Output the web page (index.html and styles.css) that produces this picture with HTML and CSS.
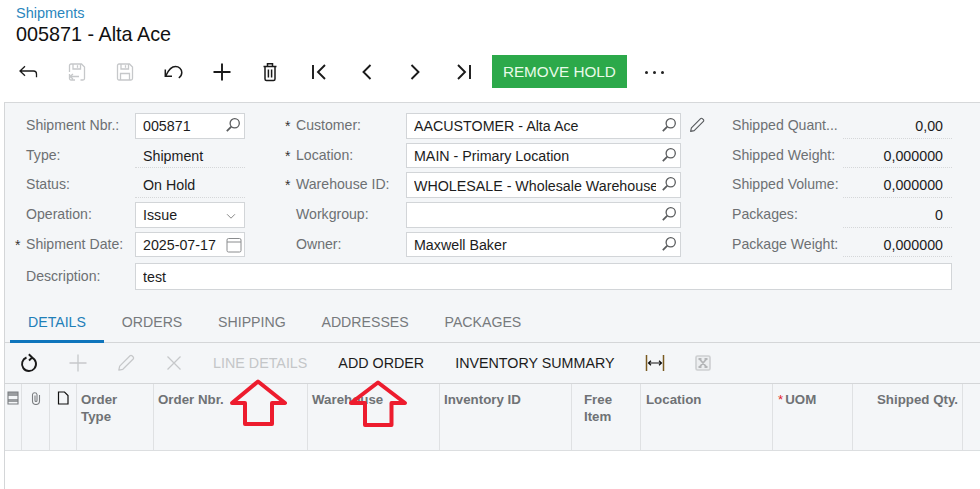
FILE: index.html
```html
<!DOCTYPE html>
<html lang="en">
<head>
<meta charset="utf-8">
<title>Shipments</title>
<link rel="stylesheet" href="styles.css">
</head>
<body>
<svg class="defs" width="0" height="0" aria-hidden="true">
  <symbol id="search" viewBox="0 0 16 16"><circle cx="9.700" cy="6.300" r="4.600" fill="none" stroke="currentColor" stroke-width="1.300"/><path d="M6.300 9.700 1.800 14.200" fill="none" stroke="currentColor" stroke-width="1.800"/></symbol>
  <symbol id="pencil" viewBox="0 0 16 16"><path d="M1.600 14.400 2.400 10.800 11.600 1.600a1.200 1.200 0 0 1 1.700 0l1.100 1.100a1.200 1.200 0 0 1 0 1.700L5.200 13.600Z" fill="none" stroke="currentColor" stroke-width="1.100" stroke-linejoin="round"/></symbol>
</svg>

<header class="page-head">
  <a class="crumb">Shipments</a>
  <h1 class="title">005871 - Alta Ace</h1>
</header>

<div class="main-bar">
  <span class="ibtn"><svg class="i24" viewBox="0 0 24 24"><path d="M4 11H17.500a3 3 0 0 1 3 3v3.200M9 6.300 4 11 9 15.700"/></svg></span>
  <span class="ibtn off"><svg class="i24" viewBox="0 0 24 24"><path d="M10 20H6a1.500 1.500 0 0 1-1.500-1.500V14M4.500 12V5.500A1.500 1.500 0 0 1 6 4H16.500L19.500 7V18.500A1.500 1.500 0 0 1 18 20H15.500M8 4V9H15.500V4M12.500 5.300V7.700M5 16.500H14M8 14 5 16.500 8 19"/></svg></span>
  <span class="ibtn off"><svg class="i24" viewBox="0 0 24 24"><path d="M6 4H16.500L19.500 7V18.500A1.500 1.500 0 0 1 18 20H6A1.500 1.500 0 0 1 4.500 18.500V5.500A1.500 1.500 0 0 1 6 4ZM8 4V9H15.500V4M12.500 5.300V7.700M7.500 20V13.500H16.500V20"/></svg></span>
  <span class="ibtn"><svg class="i24 mid" viewBox="0 0 24 24"><path d="M5 15.500C7 11 10 6.500 14.500 6.500 18 6.500 20.800 9 20.800 12.500 20.800 14.800 19.500 16.800 17.800 18M4.300 9.500V16.300H11"/></svg></span>
  <span class="ibtn"><svg class="i24 thick" viewBox="0 0 24 24"><path d="M3.500 12H20.500M12 3.500V20.500"/></svg></span>
  <span class="ibtn"><svg class="i24 mid" viewBox="0 0 24 24"><path d="M5.500 6.500H18.500M9.500 6V3.800H14.500V6M7 6.500V19A1.500 1.500 0 0 0 8.500 20.500H15.500A1.500 1.500 0 0 0 17 19V6.500M10.400 9.500V17.500M13.600 9.500V17.500"/></svg></span>
  <span class="ibtn"><svg class="i24 thick" viewBox="0 0 24 24"><path d="M6 5V19M18 5 11 12 18 19"/></svg></span>
  <span class="ibtn"><svg class="i24 thick" viewBox="0 0 24 24"><path d="M15.500 5 8.500 12 15.500 19"/></svg></span>
  <span class="ibtn"><svg class="i24 thick" viewBox="0 0 24 24"><path d="M8.500 5 15.500 12 8.500 19"/></svg></span>
  <span class="ibtn"><svg class="i24 thick" viewBox="0 0 24 24"><path d="M18 5V19M6 5 13 12 6 19"/></svg></span>
  <button class="primary">REMOVE HOLD</button>
  <span class="more"><i></i><i></i><i></i></span>
</div>

<main class="panel">
  <section class="form">
    <label class="lbl c1">Shipment Nbr.:</label>
    <div class="inp"><span class="val">005871</span><svg class="ico"><use href="#search"/></svg></div>
    <label class="lbl c2 req">Customer:</label>
    <div class="inp"><span class="val">AACUSTOMER - Alta Ace</span><svg class="ico"><use href="#search"/></svg></div>
    <svg class="pen"><use href="#pencil"/></svg>
    <label class="lbl c3">Shipped Quant...</label>
    <div class="ro num">0,00</div>

    <label class="lbl c1">Type:</label>
    <div class="ro">Shipment</div>
    <label class="lbl c2 req">Location:</label>
    <div class="inp"><span class="val">MAIN - Primary Location</span><svg class="ico"><use href="#search"/></svg></div>
    <label class="lbl c3 col6">Shipped Weight:</label>
    <div class="ro num">0,000000</div>

    <label class="lbl c1">Status:</label>
    <div class="ro">On Hold</div>
    <label class="lbl c2 req">Warehouse ID:</label>
    <div class="inp"><span class="val">WHOLESALE - Wholesale Warehouse</span><svg class="ico"><use href="#search"/></svg></div>
    <label class="lbl c3 col6">Shipped Volume:</label>
    <div class="ro num">0,000000</div>

    <label class="lbl c1">Operation:</label>
    <div class="inp"><span class="val">Issue</span><svg class="ico chev" viewBox="0 0 16 16"><path d="M3.500 6 8 10.500 12.500 6"/></svg></div>
    <label class="lbl c2">Workgroup:</label>
    <div class="inp"><span class="val"></span><svg class="ico"><use href="#search"/></svg></div>
    <label class="lbl c3 col6">Packages:</label>
    <div class="ro num">0</div>

    <label class="lbl c1 req">Shipment Date:</label>
    <div class="inp date"><span class="val">2025-07-17</span><svg class="ico cal" viewBox="0 0 16 16"><path d="M2.500 1.500H13.500A1.500 1.500 0 0 1 15 3V13.500A1.500 1.500 0 0 1 13.500 15H2.500A1.500 1.500 0 0 1 1 13.500V3A1.500 1.500 0 0 1 2.500 1.500ZM1 5H15"/></svg></div>
    <label class="lbl c2">Owner:</label>
    <div class="inp"><span class="val">Maxwell Baker</span><svg class="ico"><use href="#search"/></svg></div>
    <label class="lbl c3 col6">Package Weight:</label>
    <div class="ro num">0,000000</div>

    <label class="lbl c1 desc-l">Description:</label>
    <div class="inp desc"><span class="val">test</span></div>
  </section>

  <nav class="tabs">
    <a class="tab on">DETAILS</a>
    <a class="tab">ORDERS</a>
    <a class="tab">SHIPPING</a>
    <a class="tab">ADDRESSES</a>
    <a class="tab">PACKAGES</a>
  </nav>

  <div class="grid-bar">
    <span class="gbtn"><svg class="i24 thick" viewBox="0 0 24 24"><path d="M9.500 6.500A7 7 0 1 0 15 6.700M11.800 3.200 15.200 6.500 12 9.500"/></svg></span>
    <span class="gbtn off"><svg class="i24" viewBox="0 0 24 24"><path d="M3.500 12H20.500M12 3.500V20.500"/></svg></span>
    <span class="gbtn off"><svg class="i16"><use href="#pencil"/></svg></span>
    <span class="gbtn off"><svg class="i24" viewBox="0 0 24 24"><path d="M5.500 5.500 18.500 18.500M18.500 5.500 5.500 18.500"/></svg></span>
    <a class="act off first">LINE DETAILS</a>
    <a class="act">ADD ORDER</a>
    <a class="act">INVENTORY SUMMARY</a>
    <span class="fit"><svg class="i24" viewBox="0 0 24 24"><path class="amber" d="M3.500 4V20"/><path class="amber" d="M20.500 4V20"/><path class="arrow" d="M5.500 12H18.500M8 9.800 5.500 12 8 14.200M16 9.800 18.500 12 16 14.200"/></svg></span>
    <span class="xl"><svg class="i16x" viewBox="0 0 16 16"><rect class="xl-box" x="1" y="1" width="14" height="14" rx="1.500"/><path class="xl-x" d="M4.500 4 11.500 12M11.500 4 4.500 12M3.500 4H6.500M9.500 4H12.500M3.500 12H6.500M9.500 12H12.500"/></svg></span>
  </div>

  <div class="ghead">
    <div class="gc"><svg class="mini" viewBox="0 0 12 14"><path class="band" d="M1 1H11V5H1ZM1 8H11V11H1Z"/><path d="M1 1H11V13H1Z" fill="none"/></svg></div>
    <div class="gc"><svg class="mini clip" viewBox="0 0 12 14"><path d="M9.500 4V10A3.500 3.500 0 0 1 2.500 10V3.500A2.300 2.300 0 0 1 7 3.500V9.500A1 1 0 0 1 5 9.500V4.500" fill="none"/></svg></div>
    <div class="gc"><svg class="mini page" viewBox="0 0 12 14"><path d="M1.500 1H7.500L11 4.500V13H1.500Z" fill="none"/></svg></div>
    <div class="gc txt">Order<br>Type</div>
    <div class="gc txt">Order Nbr.</div>
    <div class="gc txt">Warehouse</div>
    <div class="gc txt">Inventory ID</div>
    <div class="gc txt free">Free<br>Item</div>
    <div class="gc txt loc">Location</div>
    <div class="gc txt"><span class="star">*</span>UOM</div>
    <div class="gc txt right">Shipped Qty.</div>
    <div class="gc last"></div>
  </div>
</main>

<svg class="arrows" viewBox="0 0 980 489" aria-hidden="true">
  <path d="M258 381.500 285 403H272V424H245V403H232Z"/>
  <path d="M378 382.500 405 403H391.500V425H365V403H351Z"/>
</svg>
</body>
</html>
```

FILE: styles.css
```css
* { box-sizing: border-box; }
html, body { margin: 0; height: 489px; overflow: hidden; background: #fff; }
body { font-family: "Liberation Sans", Arial, sans-serif; color: #1f1f1f; font-size: 14px; }
.defs { display: block; height: 0; }

.page-head { padding: 5px 16px 0; height: 49px; }
.crumb { display: block; font-size: 14.500px; line-height: 17px; color: #2a86bd; }
.title { margin: 0; font-size: 19.800px; font-weight: 400; line-height: 25px; color: #111; }

.main-bar { display: flex; align-items: center; height: 33px; margin: 6px 0 14px; padding-left: 4px; }
.ibtn { width: 48.400px; display: flex; justify-content: center; color: #1a1a1a; flex: none; }
.ibtn.off, .gbtn.off { color: #c6c8ca; }
.i24 { width: 24px; height: 24px; fill: none; stroke: currentColor; stroke-width: 1.300; }
.i24.mid { stroke-width: 1.500; }
.i24.thick { stroke-width: 1.900; }
.i16 { width: 18px; height: 18px; }
.primary { margin-left: 4px; width: 135px; height: 33px; border: 0; padding: 0; background: #2ca94a; color: #e8fbe9; font: 15.300px "Liberation Sans", Arial, sans-serif; }
.more { display: flex; gap: 5px; margin-left: 18px; padding-top: 2px; }
.more i { width: 3px; height: 3px; border-radius: 50%; background: #222; }

.panel { margin-left: 4px; height: 387px; border-left: 1px solid #d4d6d8; border-top: 1px solid #d6d8da; background: #fff; }

.form {
  display: grid;
  grid-template-columns: 130px 110px 161px 275px 51px 111px 109px;
  grid-auto-rows: 25.700px;
  row-gap: 4px;
  padding-top: 10px;
  height: 195px;
  background: #f4f6f8;
}
.lbl { color: #6d7073; font-size: 14.100px; line-height: 24px; white-space: nowrap; position: relative; }
.c1 { padding-left: 21px; }
.c2 { padding-left: 51px; }
.col6 { grid-column: 6; }
.req::before { content: "*"; position: absolute; top: 1px; font-size: 14px; color: #333; }
.c1.req::before { left: 10px; }
.c2.req::before { left: 40px; }

.inp { display: flex; align-items: center; height: 100%; border: 1px solid #d2d5d8; background: #fff; padding: 1px 3px 0 7px; overflow: hidden; }
.val { flex: 1; min-width: 0; white-space: nowrap; overflow: hidden; color: #1c1c1c; font-size: 14.250px; }
.ico { width: 16px; height: 16px; flex: none; color: #5a5c5e; margin: -3px 0 0 5px; }
.chev { fill: none; stroke: #777; stroke-width: 1; width: 14px; height: 14px; margin: 2px 3px 0 0; }
.cal { fill: none; stroke: #8a8c8e; stroke-width: 1; margin: 0 -1px 0 0; }
.pen { width: 16px; height: 16px; margin: 4px 0 0 8px; color: #55585b; }

.ro { border-bottom: 1px dotted #d5d7d9; padding: 3px 0 0 8px; font-size: 14.250px; line-height: 20px; color: #1c1c1c; white-space: nowrap; }
.num { text-align: right; padding: 3px 9px 0 0; }

.desc-l { margin-top: 3px; }
.desc { grid-column: 2 / 8; margin-top: 2px; height: 27px; padding-top: 0; }

.tabs { display: flex; height: 45px; border-bottom: 1px solid #d4d6d8; padding-left: 5px; background: #f4f6f8; }
.tab { height: 45px; padding: 16px 18px 0 17.800px; font-size: 14.150px; line-height: 16px; color: #777a7d; }
.tab.on { color: #1f7fb8; border-bottom: 3px solid #0f75bc; width: 94px; padding-left: 18px; }

.grid-bar { display: flex; align-items: center; height: 41px; border-bottom: 1px solid #d4d6d8; background: #f4f6f8; }
.gbtn { width: 48.400px; flex: none; display: flex; justify-content: center; color: #1a1a1a; }
.act { font-size: 14.300px; white-space: nowrap; color: #1c1c1c; margin-left: 31px; }
.act.first { margin-left: 14.500px; }
.act.off { color: #c4c6c8; }
.fit { margin-left: 28.500px; display: flex; color: #111; }
.amber { stroke: #7a5a20; stroke-width: 1.500; }
.arrow { stroke-width: 1.200; }
.xl { margin-left: 28px; display: flex; }
.i16x { width: 16px; height: 16px; fill: none; }
.xl-box { stroke: #cdcfd1; stroke-width: 1.600; fill: #eceef0; }
.xl-x { stroke: #b3b5b7; stroke-width: 1.800; }

.ghead {
  display: grid;
  grid-template-columns: 17px 28px 27px 77px 154px 132px 132px 69px 132px 80px 110px 18px;
  height: 67px;
  border-bottom: 1px solid #dcdee0;
  background: #f4f6f8;
}
.gc { border-right: 1px solid #dfe1e3; display: flex; justify-content: center; padding-top: 7px; }
.gc.last { border-right: 0; }
.txt { display: block; padding: 7px 4px 0; font-size: 13.300px; font-weight: 700; line-height: 17px; color: #6f7275; }
.free { padding-left: 12px; }
.loc { padding-left: 5px; }
.right { text-align: right; }
.star { color: #e3242b; margin: 0 2px 0 1px; font-weight: 400; }
.mini { width: 12px; height: 14px; stroke: #7b7e81; stroke-width: 1.100; }
.band { fill: #9a9da0; stroke: none; }
.page { stroke: #111; stroke-width: 1.200; }

.arrows { position: absolute; left: 0; top: 0; width: 980px; height: 489px; pointer-events: none; fill: none; stroke: #ed1c2e; stroke-width: 4; stroke-linejoin: round; }
```
